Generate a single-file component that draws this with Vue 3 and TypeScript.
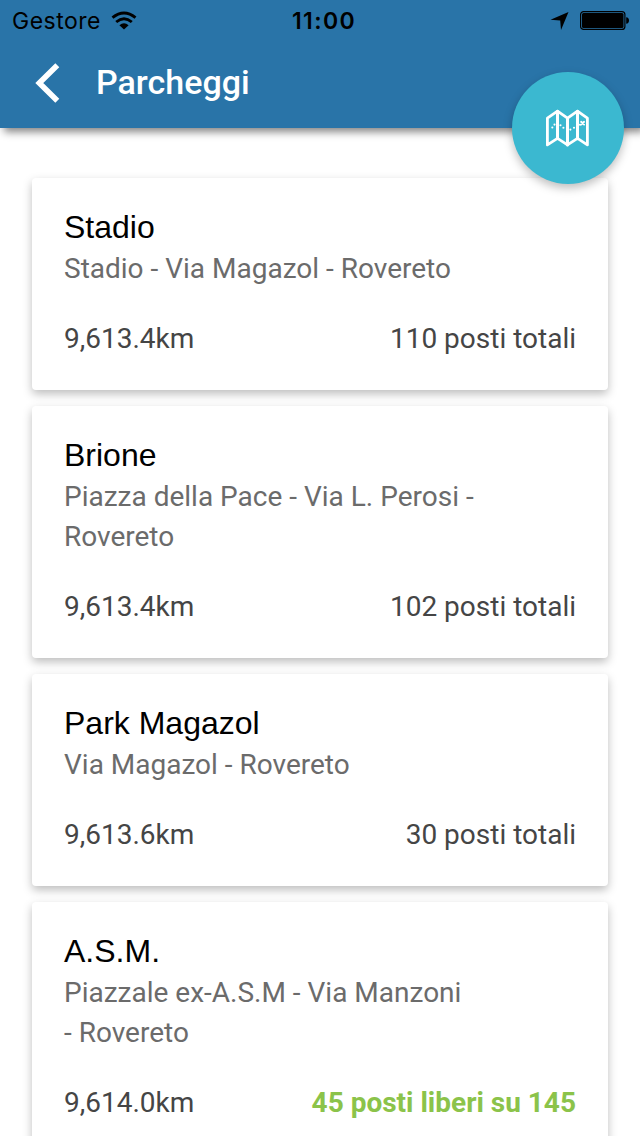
<script setup lang="ts">
interface Parking {
  name: string
  address: string[]
  distance: string
  spaces: string
  available?: boolean
}

const parkings: Parking[] = [
  { name: 'Stadio', address: ['Stadio - Via Magazol - Rovereto'], distance: '9,613.4km', spaces: '110 posti totali' },
  { name: 'Brione', address: ['Piazza della Pace - Via L. Perosi -', 'Rovereto'], distance: '9,613.4km', spaces: '102 posti totali' },
  { name: 'Park Magazol', address: ['Via Magazol - Rovereto'], distance: '9,613.6km', spaces: '30 posti totali' },
  { name: 'A.S.M.', address: ['Piazzale ex-A.S.M - Via Manzoni', '- Rovereto'], distance: '9,614.0km', spaces: '45 posti liberi su 145', available: true },
]
</script>

<template>
  <div class="screen">
    <header class="header">
      <div class="status">
        <div class="side">
          <span class="carrier">Gestore</span>
          <svg class="wifi" width="26" height="20" viewBox="0 0 26 20">
            <g fill="none" stroke="#000" stroke-width="2.9">
              <path d="M1.5 6.6Q13 -2.8 24.5 6.6" />
              <path d="M5.2 11Q13 4.5 20.8 11" />
            </g>
            <path d="M8.4 14.2Q13 10.4 17.6 14.2L13 18.6Z" />
          </svg>
        </div>
        <time class="clock">11:00</time>
        <div class="side right">
          <svg class="location" width="20" height="20" viewBox="0 0 20 20"><path d="M18.5 1L11 19L10.2 9.6L.5 8.8Z" /></svg>
          <svg class="battery" width="50" height="20" viewBox="0 0 50 20">
            <rect x=".6" y=".6" width="44.3" height="17.8" rx="3" fill="none" stroke="#000" stroke-width="1.2" />
            <rect x="2" y="2" width="41.5" height="15" rx="1.5" />
            <path d="M46.2 6.2Q49 6.5 49 9.5T46.2 12.8Z" />
          </svg>
        </div>
      </div>
      <div class="toolbar">
        <svg class="back" width="25" height="40" viewBox="0 0 25 40"><path d="M22.3 2.2L4.3 20L22.3 37.8" fill="none" stroke="#fff" stroke-width="5.6" /></svg>
        <h1 class="title">Parcheggi</h1>
      </div>
    </header>

    <button class="fab" aria-label="Mappa">
      <svg width="44" height="38" viewBox="0 0 44 38" fill="none" stroke="#fff" stroke-linejoin="round" stroke-linecap="round">
        <path stroke-width="2.8" d="M1.4 9.2L11.5 2.2L21.5 9.2L31.5 2.2L41.4 9.2V35.9L31.5 29.4L21.5 35.9L11.5 29.4L1.4 35.9Z" />
        <path stroke-width="3" d="M11.5 2.2V29.4M21.5 9.2V35.9M31.5 2.2V29.4" />
        <g fill="#fff" stroke="none">
          <circle cx="6.3" cy="18.5" r="1.05" />
          <circle cx="8.5" cy="15.6" r="1.05" />
          <circle cx="14.5" cy="16.2" r="1.05" />
          <circle cx="17.4" cy="18.7" r="1.05" />
          <circle cx="24.4" cy="20.6" r="1.05" />
          <circle cx="28" cy="18.8" r="1.05" />
          <circle cx="34" cy="15.8" r="1.05" />
        </g>
        <path stroke-width="1.9" d="M35.1 12.8L38.1 15.6M38.1 12.8L35.1 15.6" />
      </svg>
    </button>

    <main class="list">
      <article v-for="parking in parkings" :key="parking.name" class="card">
        <h2 class="name">{{ parking.name }}</h2>
        <p class="address"><span v-for="line in parking.address" :key="line">{{ line }}</span></p>
        <div class="details">
          <span>{{ parking.distance }}</span>
          <span :class="{ available: parking.available }">{{ parking.spaces }}</span>
        </div>
      </article>
    </main>
  </div>
</template>

<style>
body { background: #fff; }
</style>

<style scoped>
.screen {
  position: relative;
  box-sizing: border-box;
  height: 1136px;
  overflow: hidden;
  background: #fff;
  font-family: Roboto, "Liberation Sans", sans-serif;
}
.header {
  height: 128px;
  background: #2974a8;
  box-shadow: 4px 4px 8px rgba(0, 0, 0, 0.48);
}
.status {
  display: grid;
  grid-template-columns: 1fr auto 1fr;
  align-items: center;
  height: 42px;
  padding: 0 10px 0 12px;
  font-family: Inter, sans-serif;
}
.side { display: flex; align-items: center; }
.right { justify-content: flex-end; }
.carrier { font-size: 23px; letter-spacing: 0.5px; }
.wifi { margin: 0 0 1px 10px; }
.clock {
  padding-left: 6px;
  font-size: 23px;
  font-weight: 600;
  letter-spacing: 1.4px;
}
.battery { margin-left: 10px; }
.location { margin-bottom: 1px; }
.toolbar {
  display: flex;
  align-items: center;
  height: 82px;
  padding-left: 35px;
}
.title {
  margin: 0 0 2px 36px;
  color: #fff;
  font-size: 34px;
  font-weight: 500;
  line-height: 44px;
}
.fab {
  position: absolute;
  top: 72px;
  right: 16px;
  display: flex;
  align-items: center;
  justify-content: center;
  width: 112px;
  height: 112px;
  padding: 0;
  border: 0;
  border-radius: 50%;
  background: #3bb8d0;
  box-shadow: 0 4px 10px rgba(0, 0, 0, 0.26);
}
.list {
  display: flex;
  flex-direction: column;
  gap: 16px;
  padding: 50px 32px 0;
}
.card {
  padding: 32px 32px 31px;
  border-radius: 4px;
  background: #fff;
  box-shadow: 0 4px 10px rgba(0, 0, 0, 0.26);
}
.name {
  margin: 0 0 5px;
  color: #000;
  font: 400 32px/34px "Liberation Sans", sans-serif;
}
.address {
  display: flex;
  flex-direction: column;
  margin: 0 0 30px;
  color: #6b6b6b;
  font-size: 28px;
  line-height: 40px;
  white-space: nowrap;
}
.details {
  display: flex;
  justify-content: space-between;
  color: #454545;
  font-size: 28px;
  line-height: 40px;
}
.available { color: #8bc34a; font-weight: 700; }
</style>
